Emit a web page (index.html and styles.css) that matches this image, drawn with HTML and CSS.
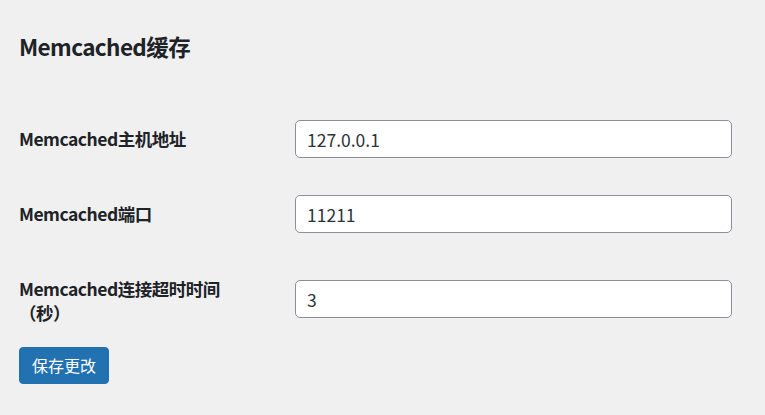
FILE: index.html
```html
<!DOCTYPE html>
<html lang="zh-CN">
<head>
<meta charset="utf-8">
<title>Memcached缓存</title>
<link rel="stylesheet" href="styles.css">
</head>
<body>
<div class="wrap">
  <h2 class="title">Memcached缓存</h2>
  <form class="settings">
    <div class="form-row">
      <label class="row-label" for="host">Memcached主机地址</label>
      <div class="row-field"><input id="host" class="text-input" type="text" value="127.0.0.1"></div>
    </div>
    <div class="form-row">
      <label class="row-label" for="port">Memcached端口</label>
      <div class="row-field"><input id="port" class="text-input" type="text" value="11211"></div>
    </div>
    <div class="form-row">
      <label class="row-label" for="timeout">Memcached连接超时时间（秒）</label>
      <div class="row-field"><input id="timeout" class="text-input" type="text" value="3"></div>
    </div>
    <div class="submit">
      <button type="button" class="button-primary">保存更改</button>
    </div>
  </form>
</div>
</body>
</html>
```
FILE: styles.css
```css
html, body {
  margin: 0;
  padding: 0;
  background: #f0f0f1;
}
body {
  font-family: "Noto Sans CJK SC", "Noto Sans", sans-serif;
  color: #1d2327;
}
.wrap {
  padding: 31px 19px 0 19px;
}
.title {
  margin: 0;
  font-size: 22.5px;
  line-height: 30px;
  font-weight: 600;
  letter-spacing: -0.6px;
  color: #1d2327;
}
.settings {
  margin-top: 40.5px;
}
.form-row {
  display: grid;
  grid-template-columns: 276px 437px;
}
.row-label {
  align-self: start;
  max-width: 240px;
  padding: 25.5px 0 21.5px;
  font-size: 17.5px;
  line-height: 24px;
  font-weight: 600;
  letter-spacing: -0.5px;
  color: #1d2327;
}
.row-field {
  align-self: center;
  padding: 18.5px 0;
}
.text-input {
  display: block;
  box-sizing: border-box;
  width: 437px;
  height: 38px;
  margin: 0;
  padding: 0 11px;
  border: 1px solid #8c8f94;
  border-radius: 5px;
  background: #fff;
  font-family: "Noto Sans CJK SC", "Noto Sans", sans-serif;
  font-size: 17.5px;
  color: #2c3338;
  outline: none;
}
.submit {
  margin: 0;
  padding: 0;
}
.button-primary {
  box-sizing: border-box;
  height: 37px;
  padding: 0 12px;
  border: 1px solid #2271b1;
  border-radius: 4px;
  background: #2271b1;
  color: #fff;
  font-family: "Noto Sans CJK SC", "Noto Sans", sans-serif;
  font-size: 16px;
  line-height: 35px;
  cursor: pointer;
}
```
